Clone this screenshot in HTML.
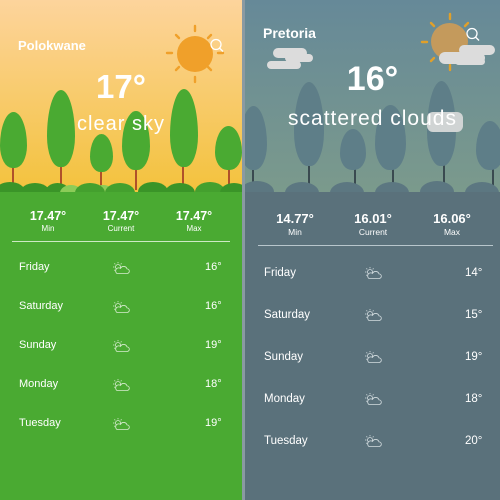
<!DOCTYPE html>
<html><head><meta charset="utf-8"><style>
*{margin:0;padding:0;box-sizing:border-box}
body{width:500px;height:500px;overflow:hidden;background:#8a9aa2;font-family:"Liberation Sans",sans-serif;position:relative;color:#fff}
.p{position:absolute;top:0;height:500px;overflow:hidden}
#L{left:0;width:242px;background:#4aaa32}
#R{left:245px;width:255px;background:#5a717b}
.sky{position:absolute;left:0;top:0;width:100%;height:193px}
#L .sky{background:linear-gradient(#fdd49c,#f3c23c)}
#R .sky{background:linear-gradient(#668998,#7b9a8c)}
.ab{position:absolute}
.tree{position:absolute;border-radius:50% 50% 45% 45%/60% 60% 40% 40%}
.trunk{position:absolute;width:2px}
.bush{position:absolute;border-radius:50%}
.t{position:absolute;text-align:center;white-space:nowrap}
.row{position:absolute;font-size:11px}
.cl{position:absolute;background:#dcdcdc;border-radius:6px}
</style></head><body>

<div class="p" id="L">
<div class="sky"></div>
<!-- sun -->
<div class="ab" style="left:177px;top:36px;width:36px;height:36px;border-radius:50%;background:#f0a02a"></div>
<svg class="ab" style="left:165px;top:24px" width="60" height="60" stroke="#f0a02a" stroke-width="2.4" stroke-linecap="round">
<line x1="30" y1="2" x2="30" y2="7"/><line x1="30" y1="53" x2="30" y2="58"/><line x1="2" y1="29" x2="7" y2="29"/><line x1="53" y1="29" x2="58" y2="29"/>
<line x1="11" y1="11" x2="14" y2="14"/><line x1="46" y1="11" x2="43" y2="14"/><line x1="11" y1="46" x2="14" y2="43"/><line x1="46" y1="46" x2="43" y2="43"/></svg>
<svg class="ab" style="left:209px;top:38px" width="16" height="16" fill="none" stroke="#fff" stroke-width="1.3"><circle cx="7" cy="6.5" r="5"/><line x1="10.5" y1="10" x2="14" y2="13.5"/></svg>
<div class="t" style="left:18px;top:38px;font-size:13px;font-weight:bold">Polokwane</div>
<div class="t" style="left:0;width:242px;top:68px;font-size:33px;font-weight:bold">17°</div>
<!-- trees -->
<div class="trunk" style="left:12px;top:165px;height:25px;background:#b0502a"></div>
<div class="trunk" style="left:60px;top:165px;height:25px;background:#b0502a"></div>
<div class="trunk" style="left:100px;top:170px;height:20px;background:#b0502a"></div>
<div class="trunk" style="left:135px;top:168px;height:22px;background:#b0502a"></div>
<div class="trunk" style="left:182px;top:165px;height:25px;background:#b0502a"></div>
<div class="trunk" style="left:228px;top:168px;height:22px;background:#b0502a"></div>
<div class="tree" style="left:0;top:112px;width:27px;height:56px;background:#4aaa32"></div>
<div class="tree" style="left:47px;top:90px;width:28px;height:77px;background:#4aaa32"></div>
<div class="tree" style="left:90px;top:134px;width:23px;height:38px;background:#4aaa32"></div>
<div class="tree" style="left:122px;top:111px;width:28px;height:59px;background:#4aaa32"></div>
<div class="tree" style="left:170px;top:89px;width:28px;height:78px;background:#4aaa32"></div>
<div class="tree" style="left:215px;top:126px;width:27px;height:44px;background:#4aaa32"></div>
<div class="t" style="left:0;width:242px;top:113px;font-size:20px;letter-spacing:1px">clear sky</div>
<div class="bush" style="left:-5px;top:182px;width:30px;height:20px;background:#3a9428"></div>
<div class="bush" style="left:20px;top:183px;width:30px;height:20px;background:#3a9428"></div>
<div class="bush" style="left:45px;top:183px;width:25px;height:20px;background:#3a9428"></div>
<div class="bush" style="left:60px;top:185px;width:22px;height:16px;background:#8ccc58"></div>
<div class="bush" style="left:92px;top:185px;width:22px;height:16px;background:#8ccc58"></div>
<div class="bush" style="left:75px;top:183px;width:30px;height:20px;background:#44a02e"></div>
<div class="bush" style="left:105px;top:183px;width:30px;height:20px;background:#44a02e"></div>
<div class="bush" style="left:138px;top:182px;width:30px;height:20px;background:#3a9428"></div>
<div class="bush" style="left:165px;top:183px;width:30px;height:20px;background:#3a9428"></div>
<div class="bush" style="left:195px;top:182px;width:30px;height:20px;background:#44a02e"></div>
<div class="bush" style="left:220px;top:183px;width:28px;height:20px;background:#3a9428"></div>
<div class="ab" style="left:0;top:192px;width:242px;height:308px;background:#4aaa32"></div>
<!-- stats -->
<div class="t" style="left:28px;width:40px;top:209px;font-size:12.5px;font-weight:bold">17.47°</div>
<div class="t" style="left:28px;width:40px;top:224px;font-size:8px">Min</div>
<div class="t" style="left:100px;width:42px;top:209px;font-size:12.5px;font-weight:bold">17.47°</div>
<div class="t" style="left:100px;width:42px;top:224px;font-size:8px">Current</div>
<div class="t" style="left:173px;width:42px;top:209px;font-size:12.5px;font-weight:bold">17.47°</div>
<div class="t" style="left:173px;width:42px;top:224px;font-size:8px">Max</div>
<div class="ab" style="left:12px;top:241px;width:218px;height:1px;background:#cde9c4"></div>
<div class="row" style="left:19px;top:261px">Friday</div><div class="row" style="left:205px;top:261px">16°</div>
<div class="row" style="left:19px;top:300px">Saturday</div><div class="row" style="left:205px;top:300px">16°</div>
<div class="row" style="left:19px;top:339px">Sunday</div><div class="row" style="left:205px;top:339px">19°</div>
<div class="row" style="left:19px;top:378px">Monday</div><div class="row" style="left:205px;top:378px">18°</div>
<div class="row" style="left:19px;top:417px">Tuesday</div><div class="row" style="left:205px;top:417px">19°</div>
<svg class="ab" style="left:112px;top:260px" width="18" height="180" fill="none" stroke="#d8ecd0" stroke-width="0.8">
<defs><g id="ic"><circle cx="6" cy="6" r="2.5"/><line x1="6" y1="1" x2="6" y2="2.3"/><line x1="1" y1="6" x2="2.4" y2="6"/><line x1="2.4" y1="2.4" x2="3.3" y2="3.3"/><line x1="9.6" y1="2.4" x2="8.7" y2="3.3"/><line x1="2.4" y1="9.6" x2="3.3" y2="8.7"/><path d="M5 12.5h10a2.3 2.3 0 0 0 0-4.6a3.5 3.5 0 0 0-6.5-.5a2.5 2.5 0 0 0-3.5 5.1z" fill="#4aaa32"/></g></defs>
<use href="#ic" y="1"/><use href="#ic" y="40"/><use href="#ic" y="79"/><use href="#ic" y="118"/><use href="#ic" y="157"/></svg>
</div>

<div class="p" id="R">
<div class="sky"></div>
<div class="ab" style="left:186px;top:23px;width:37px;height:37px;border-radius:50%;background:#c49a5c"></div>
<svg class="ab" style="left:174px;top:11px" width="62" height="62" stroke="#e0a02a" stroke-width="2.4" stroke-linecap="round">
<line x1="31" y1="3" x2="31" y2="8"/><line x1="31" y1="54" x2="31" y2="59"/><line x1="3" y1="31" x2="8" y2="31"/>
<line x1="12" y1="12" x2="15" y2="15"/><line x1="49" y1="12" x2="46" y2="15"/><line x1="12" y1="50" x2="15" y2="47"/></svg>
<div class="cl" style="left:194px;top:52px;width:46px;height:12px"></div>
<div class="cl" style="left:214px;top:45px;width:36px;height:10px"></div>
<div class="cl" style="left:210px;top:58px;width:30px;height:7px"></div>
<svg class="ab" style="left:220px;top:27px" width="16" height="16" fill="none" stroke="#fff" stroke-width="1.3"><circle cx="7" cy="6.5" r="5"/><line x1="10.5" y1="10" x2="14" y2="13.5"/></svg>
<div class="t" style="left:18px;top:25px;font-size:14px;font-weight:bold">Pretoria</div>
<div class="cl" style="left:28px;top:48px;width:34px;height:10px"></div>
<div class="cl" style="left:40px;top:54px;width:28px;height:8px"></div>
<div class="cl" style="left:22px;top:61px;width:34px;height:8px"></div>
<div class="t" style="left:0;width:255px;top:60px;font-size:34px;font-weight:bold">16°</div>
<div class="trunk" style="left:7px;top:168px;height:22px;background:#3a4a50"></div>
<div class="trunk" style="left:63px;top:165px;height:25px;background:#3a4a50"></div>
<div class="trunk" style="left:109px;top:168px;height:22px;background:#3a4a50"></div>
<div class="trunk" style="left:147px;top:168px;height:25px;background:#3a4a50"></div>
<div class="trunk" style="left:198px;top:165px;height:22px;background:#3a4a50"></div>
<div class="trunk" style="left:247px;top:168px;height:25px;background:#3a4a50"></div>
<div class="tree" style="left:-5px;top:106px;width:27px;height:64px;background:#5e7e88"></div>
<div class="tree" style="left:49px;top:82px;width:30px;height:84px;background:#5e7e88"></div>
<div class="tree" style="left:95px;top:129px;width:26px;height:41px;background:#5e7e88"></div>
<div class="tree" style="left:130px;top:105px;width:31px;height:65px;background:#5e7e88"></div>
<div class="tree" style="left:182px;top:81px;width:29px;height:85px;background:#5e7e88"></div>
<div class="tree" style="left:231px;top:121px;width:28px;height:49px;background:#5e7e88"></div>
<div class="cl" style="left:182px;top:112px;width:36px;height:20px;background:#d0d4d4"></div>
<div class="t" style="left:0;width:255px;top:107px;font-size:21px;letter-spacing:1px">scattered clouds</div>
<div class="bush" style="left:-5px;top:181px;width:34px;height:22px;background:#5c7781"></div>
<div class="bush" style="left:40px;top:182px;width:34px;height:22px;background:#5c7781"></div>
<div class="bush" style="left:85px;top:182px;width:34px;height:22px;background:#5c7781"></div>
<div class="bush" style="left:130px;top:182px;width:34px;height:22px;background:#5c7781"></div>
<div class="bush" style="left:175px;top:181px;width:34px;height:22px;background:#5c7781"></div>
<div class="bush" style="left:220px;top:182px;width:34px;height:22px;background:#5c7781"></div>
<div class="ab" style="left:0;top:192px;width:255px;height:308px;background:#5a717b"></div>
<div class="t" style="left:28px;width:44px;top:211px;font-size:13px;font-weight:bold">14.77°</div>
<div class="t" style="left:28px;width:44px;top:227px;font-size:8.5px">Min</div>
<div class="t" style="left:106px;width:44px;top:211px;font-size:13px;font-weight:bold">16.01°</div>
<div class="t" style="left:106px;width:44px;top:227px;font-size:8.5px">Current</div>
<div class="t" style="left:185px;width:44px;top:211px;font-size:13px;font-weight:bold">16.06°</div>
<div class="t" style="left:185px;width:44px;top:227px;font-size:8.5px">Max</div>
<div class="ab" style="left:13px;top:245px;width:235px;height:1px;background:#b8c6cc"></div>
<div class="row" style="left:19px;top:267px;font-size:11.5px">Friday</div><div class="row" style="left:220px;top:267px;font-size:11.5px">14°</div>
<div class="row" style="left:19px;top:309px;font-size:11.5px">Saturday</div><div class="row" style="left:220px;top:309px;font-size:11.5px">15°</div>
<div class="row" style="left:19px;top:351px;font-size:11.5px">Sunday</div><div class="row" style="left:220px;top:351px;font-size:11.5px">19°</div>
<div class="row" style="left:19px;top:393px;font-size:11.5px">Monday</div><div class="row" style="left:220px;top:393px;font-size:11.5px">18°</div>
<div class="row" style="left:19px;top:435px;font-size:11.5px">Tuesday</div><div class="row" style="left:220px;top:435px;font-size:11.5px">20°</div>
<svg class="ab" style="left:119px;top:265px" width="20" height="190" fill="none" stroke="#d4dde0" stroke-width="0.8">
<defs><g id="ic2"><circle cx="6" cy="6" r="2.5"/><line x1="6" y1="1" x2="6" y2="2.3"/><line x1="1" y1="6" x2="2.4" y2="6"/><line x1="2.4" y1="2.4" x2="3.3" y2="3.3"/><line x1="9.6" y1="2.4" x2="8.7" y2="3.3"/><line x1="2.4" y1="9.6" x2="3.3" y2="8.7"/><path d="M5 12.5h10a2.3 2.3 0 0 0 0-4.6a3.5 3.5 0 0 0-6.5-.5a2.5 2.5 0 0 0-3.5 5.1z" fill="#5a717b"/></g></defs>
<use href="#ic2" y="1"/><use href="#ic2" y="43"/><use href="#ic2" y="85"/><use href="#ic2" y="127"/><use href="#ic2" y="169"/></svg>
</div>
</body></html>
